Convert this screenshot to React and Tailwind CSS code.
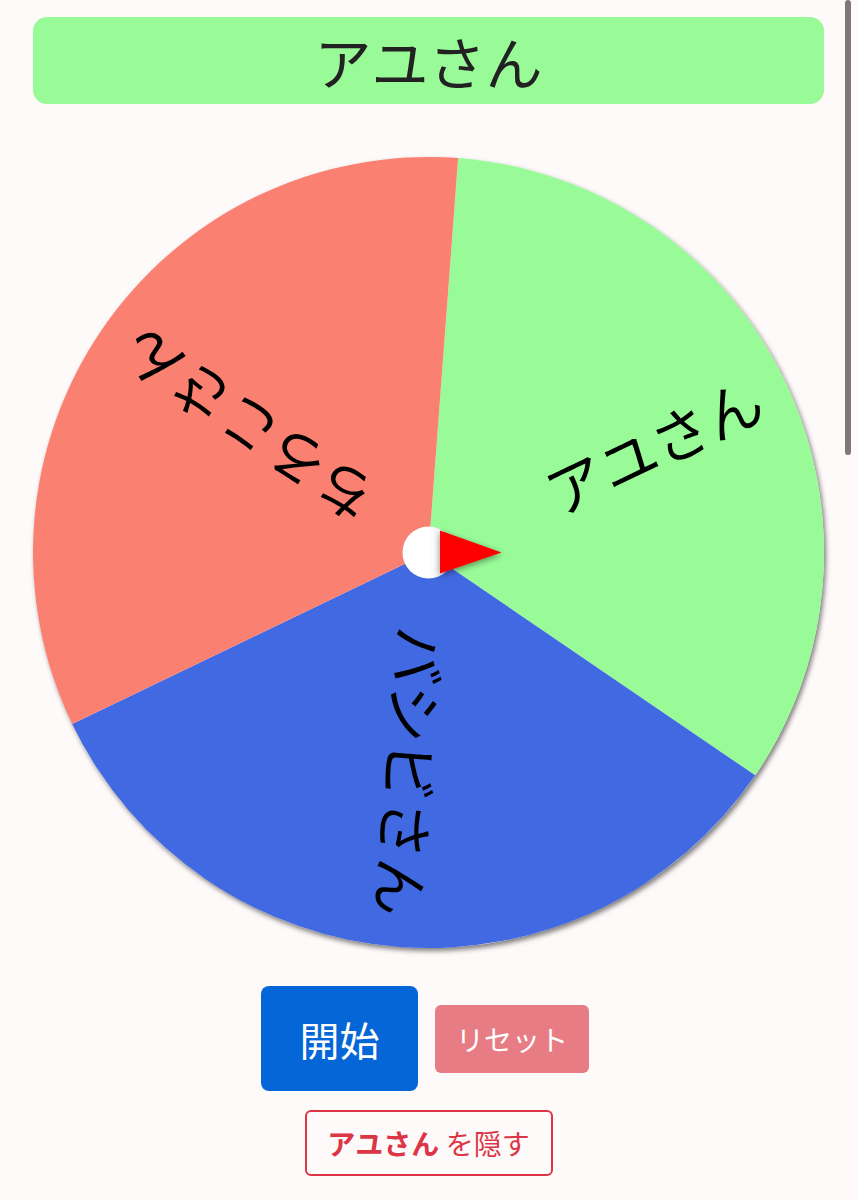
import React from "react";

// ルーレットの項目
const ITEMS = [
  { name: "アユさん", color: "#98fb98" },
  { name: "バシビさん", color: "#4169e1" },
  { name: "ちろこさん", color: "#fa8072" },
];

const SIZE = 791;
const C = SIZE / 2;
const R = SIZE / 2;
const START = -85.7; // 最初の境界の角度

const pt = (deg, r) => {
  const a = (deg * Math.PI) / 180;
  return [C + r * Math.cos(a), C + r * Math.sin(a)];
};

function Wheel() {
  const step = 360 / ITEMS.length;
  return (
    <div className="w-[791px] h-[791px] rounded-full shadow-[2px_3px_5px_rgba(0,0,0,0.5)]">
      <svg width={SIZE} height={SIZE} viewBox={`0 0 ${SIZE} ${SIZE}`} className="block">
        <defs>
          <linearGradient id="knob" x1="0" y1="0" x2="1" y2="0">
            <stop offset="0.5" stopColor="#ffffff" />
            <stop offset="0.75" stopColor="#f4f4f4" />
            <stop offset="1" stopColor="#9a9a9a" />
          </linearGradient>
          <filter id="ds" x="-50%" y="-50%" width="200%" height="200%">
            <feDropShadow dx="0" dy="2" stdDeviation="3" floodColor="#000" floodOpacity="0.45" />
          </filter>
        </defs>
        {ITEMS.map((item, i) => {
          const a0 = START + step * i;
          const a1 = a0 + step;
          const [x0, y0] = pt(a0, R);
          const [x1, y1] = pt(a1, R);
          return (
            <path
              key={item.name}
              d={`M ${C} ${C} L ${x0} ${y0} A ${R} ${R} 0 0 1 ${x1} ${y1} Z`}
              fill={item.color}
            />
          );
        })}
        {ITEMS.map((item, i) => {
          const mid = START + step * i + step / 2;
          return (
            <text
              key={item.name}
              x={C + 365}
              y={C}
              textAnchor="end"
              dominantBaseline="central"
              fontSize="58"
              fill="#000"
              fontFamily="'Noto Sans CJK JP', sans-serif"
              transform={`rotate(${mid} ${C} ${C})`}
            >
              {item.name}
            </text>
          );
        })}
        {/* 針 */}
        <circle cx={C} cy={C} r="26" fill="url(#knob)" />
        <polygon
          points={`${C + 11.5},${C - 22} ${C + 11.5},${C + 21} ${C + 73},${C}`}
          fill="#ff0000"
          filter="url(#ds)"
        />
      </svg>
    </div>
  );
}

export default function App() {
  return (
    <div className="relative min-h-screen w-full bg-[#fffafa] px-[33px] pt-[17px] pb-6 font-['Noto_Sans_CJK_JP',sans-serif]">
      {/* 当選者 */}
      <div className="h-[87px] rounded-[14px] bg-[#98fb98] flex items-center justify-center">
        <span className="text-[57px] leading-none text-[#222]">アユさん</span>
      </div>

      <div className="mt-[53px] flex justify-center">
        <Wheel />
      </div>

      <div className="mt-[38px] pr-[7px] flex items-center justify-center gap-[17px]">
        <button className="w-[157px] h-[105px] rounded-[8px] bg-[#0566d8] text-white text-[40px] leading-none">
          開始
        </button>
        <button className="w-[154px] h-[68px] rounded-[6px] bg-[#e77c85] text-white text-[28px] leading-none">
          リセット
        </button>
      </div>

      <div className="mt-[19px] flex justify-center">
        <button className="w-[248px] h-[66px] rounded-[6px] border-2 border-[#dc3545] text-[#dc3545] text-[28px] leading-none">
          <span className="font-bold">アユさん</span> を隠す
        </button>
      </div>

      {/* スクロールバー */}
      <div className="absolute right-[6px] top-0 w-[6px] h-[455px] rounded-full bg-[#7f7a7a]" />
    </div>
  );
}
